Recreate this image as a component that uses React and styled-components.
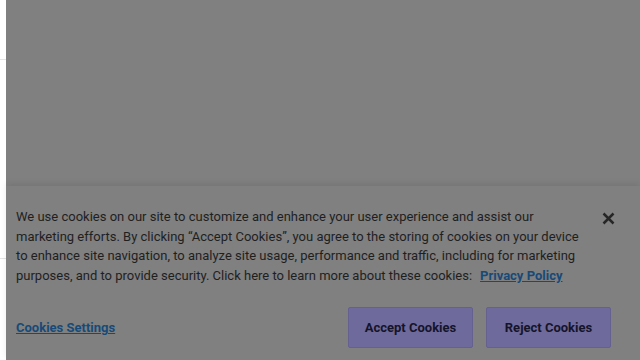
import React from "react";
import styled, { createGlobalStyle } from "styled-components";

const Global = createGlobalStyle`
  html, body { margin: 0; padding: 0; background: #ffffff; }
  body { width: 640px; height: 360px; overflow: hidden; font-family: Roboto, "Liberation Sans", sans-serif; }
`;

const Page = styled.div`
  position: relative;
  width: 640px;
  height: 360px;
  background: #ffffff;
  display: flex;
`;

const Gutter = styled.div`
  width: 6px;
  flex: none;
  display: flex;
  flex-direction: column;
`;

const Rule = styled.div`
  height: 1px;
  background: #e4e4e4;
  margin-top: ${(p) => p.$top}px;
`;

const Overlay = styled.div`
  flex: 1;
  background: #808080;
  display: flex;
  flex-direction: column;
  justify-content: flex-end;
`;

const Banner = styled.section`
  height: 174px;
  background: #808080;
  box-shadow: 0 -3px 6px rgba(0, 0, 0, 0.08);
  padding: 21px 10px 0 10px;
  box-sizing: border-box;
  display: flex;
  flex-direction: column;
`;

const TopRow = styled.div`
  display: flex;
  align-items: flex-start;
`;

const Message = styled.p`
  margin: 0;
  width: 568px;
  font-size: 13px;
  line-height: 19.6px;
  color: #1f1f1f;
`;

const Link = styled.a`
  font-size: 13px;
  color: #174a78;
  font-weight: 700;
  text-decoration: underline;
  margin-left: ${(p) => p.$gap || 0}px;
`;

const Close = styled.button`
  margin: 2px 0 0 15px;
  width: 18px;
  height: 18px;
  padding: 0;
  border: none;
  background: none;
  display: flex;
  align-items: center;
  justify-content: center;
`;

const BottomRow = styled.div`
  display: flex;
  align-items: center;
  justify-content: space-between;
  margin-top: 22px;
  padding-right: 19px;
`;

const Buttons = styled.div`
  display: flex;
  gap: 13px;
`;

const Button = styled.button`
  width: 125px;
  height: 41px;
  background: #6e6a9b;
  border: 1px solid #65618f;
  border-radius: 2px;
  color: #15142a;
  font-family: Roboto, "Liberation Sans", sans-serif;
  font-size: 13px;
  font-weight: 700;
  padding: 0;
`;

export default function App() {
  return (
    <>
      <Global />
      <Page>
        <Gutter>
          <Rule $top={59} />
          <Rule $top={198} />
        </Gutter>
        <Overlay>
          <Banner>
            <TopRow>
              <Message>
                We use cookies on our site to customize and enhance your user experience and assist our
                marketing efforts. By clicking “Accept Cookies”, you agree to the storing of cookies on your device
                to enhance site navigation, to analyze site usage, performance and traffic, including for marketing
                purposes, and to provide security. Click here to learn more about these cookies:
                <Link $gap={8} href="#">Privacy Policy</Link>
              </Message>
              <Close aria-label="Close">
                <svg width="13" height="13" viewBox="0 0 13 13">
                  <path d="M1.5 1.5 L11.5 11.5 M11.5 1.5 L1.5 11.5" stroke="#262626" strokeWidth="2.5" strokeLinecap="butt" />
                </svg>
              </Close>
            </TopRow>
            <BottomRow>
              <Link href="#">Cookies Settings</Link>
              <Buttons>
                <Button>Accept Cookies</Button>
                <Button>Reject Cookies</Button>
              </Buttons>
            </BottomRow>
          </Banner>
        </Overlay>
      </Page>
    </>
  );
}
